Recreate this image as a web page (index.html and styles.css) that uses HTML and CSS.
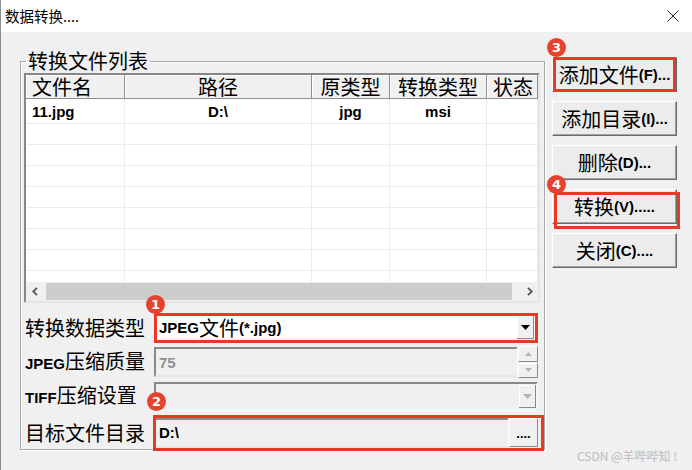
FILE: index.html
```html
<!DOCTYPE html>
<html lang="zh">
<head>
<meta charset="utf-8">
<title>数据转换</title>
<link rel="stylesheet" href="styles.css">
</head>
<body>
<div class="page">
  <header class="titlebar">
    <span class="title">数据转换....</span>
    <svg class="close" width="12" height="12" viewBox="0 0 12 12"><path d="M0.5 0.5 L11.5 11.5 M11.5 0.5 L0.5 11.5" stroke="#222" stroke-width="1"/></svg>
  </header>
  <main class="client">
    <fieldset class="group">
      <legend>转换文件列表</legend>
      <div class="list">
        <div class="lhead">
          <div class="hc hl">文件名</div>
          <div class="hc">路径</div>
          <div class="hc">原类型</div>
          <div class="hc">转换类型</div>
          <div class="hc hl">状态</div>
        </div>
        <div class="lbody">
          <div class="lrow first"><div class="c cl">11.jpg</div><div class="c">D:\</div><div class="c">jpg</div><div class="c">msi</div><div class="c"></div></div>
          <div class="lrow"><div class="c"></div><div class="c"></div><div class="c"></div><div class="c"></div><div class="c"></div></div>
          <div class="lrow"><div class="c"></div><div class="c"></div><div class="c"></div><div class="c"></div><div class="c"></div></div>
          <div class="lrow"><div class="c"></div><div class="c"></div><div class="c"></div><div class="c"></div><div class="c"></div></div>
          <div class="lrow"><div class="c"></div><div class="c"></div><div class="c"></div><div class="c"></div><div class="c"></div></div>
          <div class="lrow"><div class="c"></div><div class="c"></div><div class="c"></div><div class="c"></div><div class="c"></div></div>
          <div class="lrow"><div class="c"></div><div class="c"></div><div class="c"></div><div class="c"></div><div class="c"></div></div>
          <div class="lrow"><div class="c"></div><div class="c"></div><div class="c"></div><div class="c"></div><div class="c"></div></div>
          <div class="lrow"><div class="c"></div><div class="c"></div><div class="c"></div><div class="c"></div><div class="c"></div></div>
        </div>
        <div class="hscroll">
          <span class="sbtn"><svg width="6" height="9" viewBox="0 0 6 9"><path d="M5 0.8 L1.3 4.5 L5 8.2" fill="none" stroke="#555" stroke-width="1.8"/></svg></span>
          <div class="track"><div class="thumb"></div></div>
          <span class="sbtn"><svg width="6" height="9" viewBox="0 0 6 9"><path d="M1 0.8 L4.7 4.5 L1 8.2" fill="none" stroke="#555" stroke-width="1.8"/></svg></span>
        </div>
      </div>
      <div class="form">
        <div class="frow r1">
          <label class="flabel">转换数据类型</label>
          <div class="combo white">
            <span class="val"><span class="lt">JPEG</span>文件<span class="lt">(*.jpg)</span></span>
            <span class="dd"><svg width="9" height="5" viewBox="0 0 9 5"><path d="M0 0 H9 L4.5 5 Z" fill="#000"/></svg></span>
          </div>
        </div>
        <div class="frow r2">
          <label class="flabel"><span class="lt">JPEG</span>压缩质量</label>
          <div class="field q"><span class="lt dim">75</span></div>
          <div class="spin">
            <span class="sp"><svg width="7" height="4" viewBox="0 0 7 4"><path d="M0 4 H7 L3.5 0 Z" fill="#b4b4b4"/></svg></span>
            <span class="sp"><svg width="7" height="4" viewBox="0 0 7 4"><path d="M0 0 H7 L3.5 4 Z" fill="#b4b4b4"/></svg></span>
          </div>
        </div>
        <div class="frow r3">
          <label class="flabel"><span class="lt">TIFF</span>压缩设置</label>
          <div class="combo grey">
            <span class="val"></span>
            <span class="dd raised"><svg width="9" height="5" viewBox="0 0 9 5"><path d="M0 0 H9 L4.5 5 Z" fill="#b4b4b4"/></svg></span>
          </div>
        </div>
        <div class="frow r4">
          <label class="flabel">目标文件目录</label>
          <div class="field dir"><span class="lt">D:\</span></div>
          <span class="browse lt">....</span>
        </div>
      </div>
    </fieldset>
    <div class="buttons">
      <div class="btn">添加文件<span class="lt">(F)...</span></div>
      <div class="btn">添加目录<span class="lt">(I)...</span></div>
      <div class="btn">删除<span class="lt">(D)...</span></div>
      <div class="btn">转换<span class="lt">(V).....</span></div>
      <div class="btn">关闭<span class="lt">(C)....</span></div>
    </div>
  </main>

  <div class="mark m1"></div>
  <div class="mark m2"></div>
  <div class="mark m3"></div>
  <div class="mark m4"></div>
  <span class="badge b1">1</span>
  <span class="badge b2">2</span>
  <span class="badge b3">3</span>
  <span class="badge b4">4</span>
  <span class="watermark">CSDN @羊哔哔知 !</span>
</div>
</body>
</html>
```
FILE: styles.css
```css
* { box-sizing: border-box; }
body {
  margin: 0;
  font-family: "Noto Sans CJK SC", "DejaVu Sans", sans-serif;
  color: #000;
}
.page {
  width: 692px;
  height: 470px;
  position: relative;
  overflow: hidden;
  background: #f0f0f0;
  border-left: 1px solid #8d8d8d;
}
.titlebar {
  height: 32px;
  background: #fff;
  display: flex;
  align-items: center;
  justify-content: space-between;
  padding: 0 13px 0 4px;
}
.title {
  font-size: 14.5px;
  line-height: 18px;
}
.close { display: block; }

.lt {
  font-family: "Liberation Sans", "DejaVu Sans", sans-serif;
  font-weight: bold;
  font-size: 15px;
}

.client {
  display: flex;
  align-items: flex-start;
  padding: 18px 0 0 19px;
}
.group {
  width: 525px;
  height: 400px;
  margin: 0;
  padding: 0 4px 0 3px;
  border: 1px solid #a9a9a9;
  box-shadow: inset 1px 1px 0 #fff, 1px 1px 0 #fff;
  min-width: 0;
}
.group legend {
  margin-left: 2px;
  padding: 0 2px;
  font-size: 20px;
  line-height: 22px;
}

.list {
  width: 516px;
  height: 230px;
  margin-top: 1px;
  display: flex;
  flex-direction: column;
  background: #fff;
  border: 2px solid;
  border-color: #888 #e4e4e4 #e4e4e4 #888;
}
.lhead, .lrow {
  display: grid;
  grid-template-columns: 99px 187px 78px 97px 51px;
}
.lhead { height: 24px; flex: none; }
.hc {
  background: #f0f0f0;
  font-size: 20px;
  line-height: 23px;
  text-align: center;
  white-space: nowrap;
  border-right: 1px solid #8f8f8f;
  border-bottom: 1px solid #8f8f8f;
  box-shadow: inset 1px 1px 0 #fff;
}
.hl { text-align: left; padding-left: 6px; }
.lbody { flex: 1; overflow: hidden; }
.lrow {
  height: 21px;
  border-bottom: 1px solid #ececec;
}
.lrow.first { height: 25px; }
.c {
  border-right: 1px solid #ececec;
  text-align: center;
  font-family: "Liberation Sans", "DejaVu Sans", sans-serif;
  font-weight: bold;
  font-size: 15px;
  line-height: 20px;
  padding-top: 3px;
  white-space: nowrap;
}
.cl { text-align: left; padding-left: 6px; }

.hscroll {
  height: 19px;
  flex: none;
  display: flex;
  background: #f0f0f0;
}
.sbtn {
  width: 17px;
  display: flex;
  align-items: center;
  justify-content: center;
}
.track {
  flex: 1;
  padding: 1px 9px 1px 3px;
}
.thumb {
  height: 100%;
  background: #cdcdcd;
}

.form {
  display: flex;
  flex-direction: column;
}
.frow {
  display: flex;
  align-items: center;
}
.flabel {
  width: 130px;
  flex: none;
  padding-left: 1px;
  font-size: 20px;
  line-height: 24px;
  white-space: nowrap;
}
.r1 { margin-top: 11px; height: 27px; }
.r2 { margin-top: 5px; height: 32px; }
.r3 { margin-top: 4px; height: 29px; }
.r4 { margin-top: 6px; height: 31px; }

.combo {
  height: 100%;
  display: flex;
  align-items: stretch;
  border: 2px solid;
  border-color: #8a8a8a #f4f4f4 #f4f4f4 #8a8a8a;
}
.combo.white { width: 382px; background: #fff; }
.combo.grey { width: 384px; background: #f0f0f0; }
.combo .val {
  flex: 1;
  padding-left: 3px;
  display: flex;
  align-items: center;
  font-size: 20px;
  line-height: 22px;
}
.dd {
  width: 17px;
  display: flex;
  align-items: center;
  justify-content: center;
  background: #f0f0f0;
  border-right: 1px solid #8a8a8a;
  border-bottom: 1px solid #8a8a8a;
  box-shadow: inset 1px 1px 0 #fff;
}
.dd.raised { margin: 1px 0; }

.field {
  height: 30px;
  display: flex;
  align-items: center;
  padding-left: 3px;
  background: #f0f0f0;
  border: 2px solid;
  border-color: #8a8a8a #f4f4f4 #e6e6e6 #8a8a8a;
}
.field.q { width: 364px; }
.field.dir { width: 355px; }
.dim { color: #909090; }

.spin {
  width: 20px;
  height: 32px;
  display: flex;
  flex-direction: column;
  gap: 1px;
}
.sp {
  flex: 1;
  display: flex;
  align-items: center;
  justify-content: center;
  background: #f0f0f0;
  border: 1px solid;
  border-color: #fff #8a8a8a #8a8a8a #fff;
}

.browse {
  width: 29px;
  height: 29px;
  display: flex;
  align-items: center;
  justify-content: center;
  background: #f0f0f0;
  border: 1px solid;
  border-color: #fff #8a8a8a #8a8a8a #fff;
  padding-top: 1px;
  font-size: 13px;
}

.buttons {
  display: flex;
  flex-direction: column;
  gap: 9px;
  margin: 7px 0 0 7px;
}
.btn {
  width: 125px;
  height: 35px;
  display: flex;
  align-items: center;
  justify-content: center;
  background: #ececec;
  border: 1px solid;
  border-color: #fff #6a6a6a #6a6a6a #fff;
  box-shadow: inset -1px -1px 0 #a0a0a0;
  font-size: 20px;
  line-height: 24px;
  white-space: nowrap;
}

.mark {
  position: absolute;
  border: 3px solid #e53a25;
  pointer-events: none;
}
.m1 { left: 153px; top: 313px; width: 384px; height: 30px; }
.m2 { left: 152px; top: 415px; width: 391px; height: 36px; }
.m3 { left: 552px; top: 57px; width: 123px; height: 35px; }
.m4 { left: 553px; top: 192px; width: 126px; height: 37px; }

.badge {
  position: absolute;
  width: 19px;
  height: 19px;
  border-radius: 50%;
  background: #e5432f;
  color: #fff;
  font-family: "DejaVu Sans", sans-serif;
  font-weight: bold;
  font-size: 13px;
  line-height: 19px;
  text-align: center;
}
.b1 { left: 145px; top: 295px; }
.b2 { left: 146px; top: 392px; }
.b3 { left: 546px; top: 38px; }
.b4 { left: 546px; top: 175px; }

.watermark {
  position: absolute;
  left: 576px;
  top: 448px;
  font-size: 12px;
  line-height: 16px;
  color: #bdbdbd;
  white-space: nowrap;
}
```
